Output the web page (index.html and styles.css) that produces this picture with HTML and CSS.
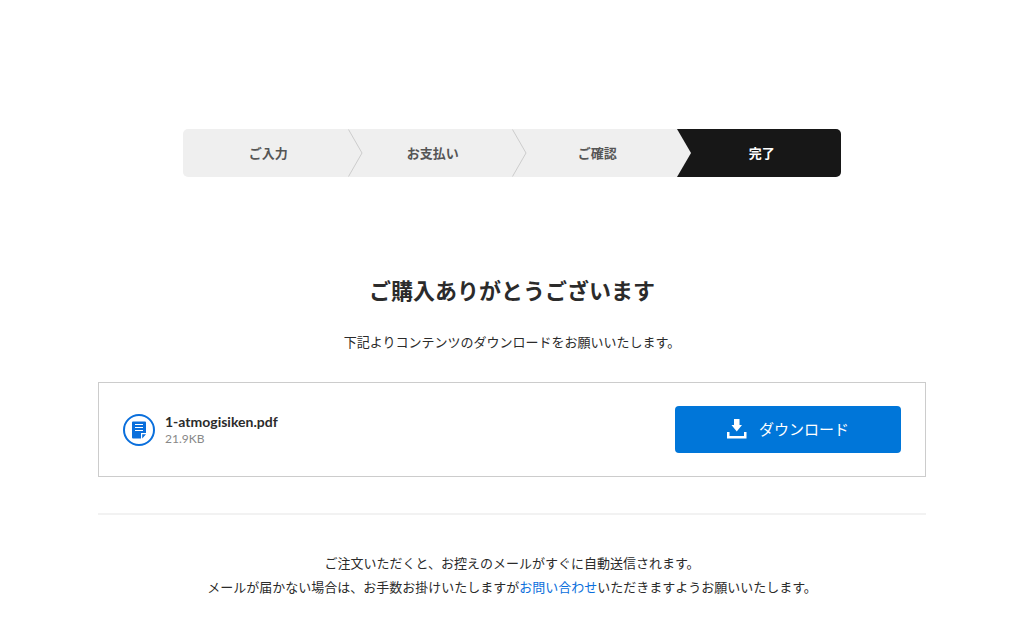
FILE: index.html
```html
<!DOCTYPE html>
<html lang="ja">
<head>
  <meta charset="UTF-8">
  <meta name="viewport" content="width=device-width, initial-scale=1">
  <title>ご購入ありがとうございます</title>
  <link rel="stylesheet" href="styles.css">
</head>
<body>
  <main class="container">
    <ol class="steps">
      <li class="step">ご入力
        <svg class="step-arrow" viewBox="0 0 15 48" preserveAspectRatio="none"><path d="M.5 .5L14 24L.5 47.5"/></svg>
      </li>
      <li class="step">お支払い
        <svg class="step-arrow" viewBox="0 0 15 48" preserveAspectRatio="none"><path d="M.5 .5L14 24L.5 47.5"/></svg>
      </li>
      <li class="step">ご確認</li>
      <li class="step is-current" aria-current="step">完了
        <svg class="step-notch" viewBox="0 0 15 48" preserveAspectRatio="none"><path d="M0 0L14 24L0 48z"/></svg>
      </li>
    </ol>

    <h1 class="title">ご購入ありがとうございます</h1>
    <p class="lead">下記よりコンテンツのダウンロードをお願いいたします。</p>

    <div class="file-box">
      <svg class="file-icon" viewBox="0 0 32 32">
        <circle cx="16" cy="16" r="15" fill="#fff" stroke="#0a6fdc" stroke-width="2"/>
        <path d="M10 7.500h12a1 1 0 0 1 1 1V19h-5v5.500h-8a1 1 0 0 1-1-1v-15a1 1 0 0 1 1-1z" fill="#0a6fdc"/>
        <path d="M19.200 24.500v-4.300H23z" fill="#0a6fdc"/>
        <path d="M12 10.500h8M12 13.500h8M12 16.500h8" stroke="#fff"/>
      </svg>
      <div class="file-info">
        <p class="file-name">1-atmogisiken.pdf</p>
        <p class="file-size">21.9KB</p>
      </div>
      <button type="button" class="download-btn">
        <svg class="download-icon" viewBox="0 0 20 20"><path d="M7 0h5.500v6H15l-5.250 6.500L4.500 6H7zM0 13h2.500v4H17v-4h2.500v6.500H0z"/></svg>
        ダウンロード
      </button>
    </div>

    <p class="note">
      ご注文いただくと、お控えのメールがすぐに自動送信されます。<br>
      メールが届かない場合は、お手数お掛けいたしますが<a href="#">お問い合わせ</a>いただきますようお願いいたします。
    </p>
  </main>
</body>
</html>
```
FILE: styles.css
```css
* {
  box-sizing: border-box;
}

body {
  margin: 0;
  background: #fff;
  color: #2b2b2b;
  font-family: Lato, "Noto Sans CJK JP", sans-serif;
  font-size: 13px;
  line-height: 24px;
}

h1, p, ol {
  margin: 0;
  padding: 0;
}

.container {
  max-width: 876px;
  margin: 0 auto;
  padding: 129px 24px 20px;
}

/* ステップ */
.steps {
  display: flex;
  max-width: 658px;
  margin: 0 auto 98px;
  list-style: none;
  background: #efefef;
  border-radius: 5px;
  overflow: hidden;
}

.step {
  position: relative;
  flex: 1;
  padding-left: 6px;
  line-height: 48px;
  font-weight: bold;
  color: #555;
  text-align: center;
}

.step.is-current {
  background: #171717;
  color: #fff;
}

.step-arrow,
.step-notch {
  position: absolute;
  top: 0;
  width: 15px;
  height: 100%;
}

.step-arrow {
  left: 100%;
  fill: none;
  stroke: #ccc;
}

.step-notch {
  left: 0;
  fill: #efefef;
}

.title {
  margin-bottom: 23px;
  font-size: 22px;
  line-height: 32px;
  text-align: center;
}

.lead {
  margin-bottom: 28px;
  text-align: center;
}

/* ダウンロード */
.file-box {
  display: flex;
  align-items: center;
  padding: 23px 24px;
  border: 1px solid #ccc;
}

.file-icon {
  width: 32px;
  height: 32px;
  margin-right: 10px;
}

.file-info {
  flex: 1;
}

.file-name {
  font-size: 14px;
  font-weight: bold;
  line-height: 18px;
}

.file-size {
  font-size: 12px;
  line-height: 16px;
  color: #888;
}

.download-btn {
  display: flex;
  align-items: center;
  justify-content: center;
  gap: 12px;
  width: 226px;
  height: 47px;
  padding: 0 0 2px;
  border: none;
  border-radius: 4px;
  background: #0076d9;
  color: #fff;
  font-family: inherit;
  font-size: 15px;
  cursor: pointer;
}

.download-btn:hover {
  background: #0069c2;
}

.download-icon {
  width: 20px;
  height: 20px;
  fill: #fff;
}

.note {
  margin-top: 36px;
  padding-top: 36px;
  border-top: 2px solid #f2f2f2;
  text-align: center;
}

.note a {
  color: #0a6fdc;
  text-decoration: none;
}
```
